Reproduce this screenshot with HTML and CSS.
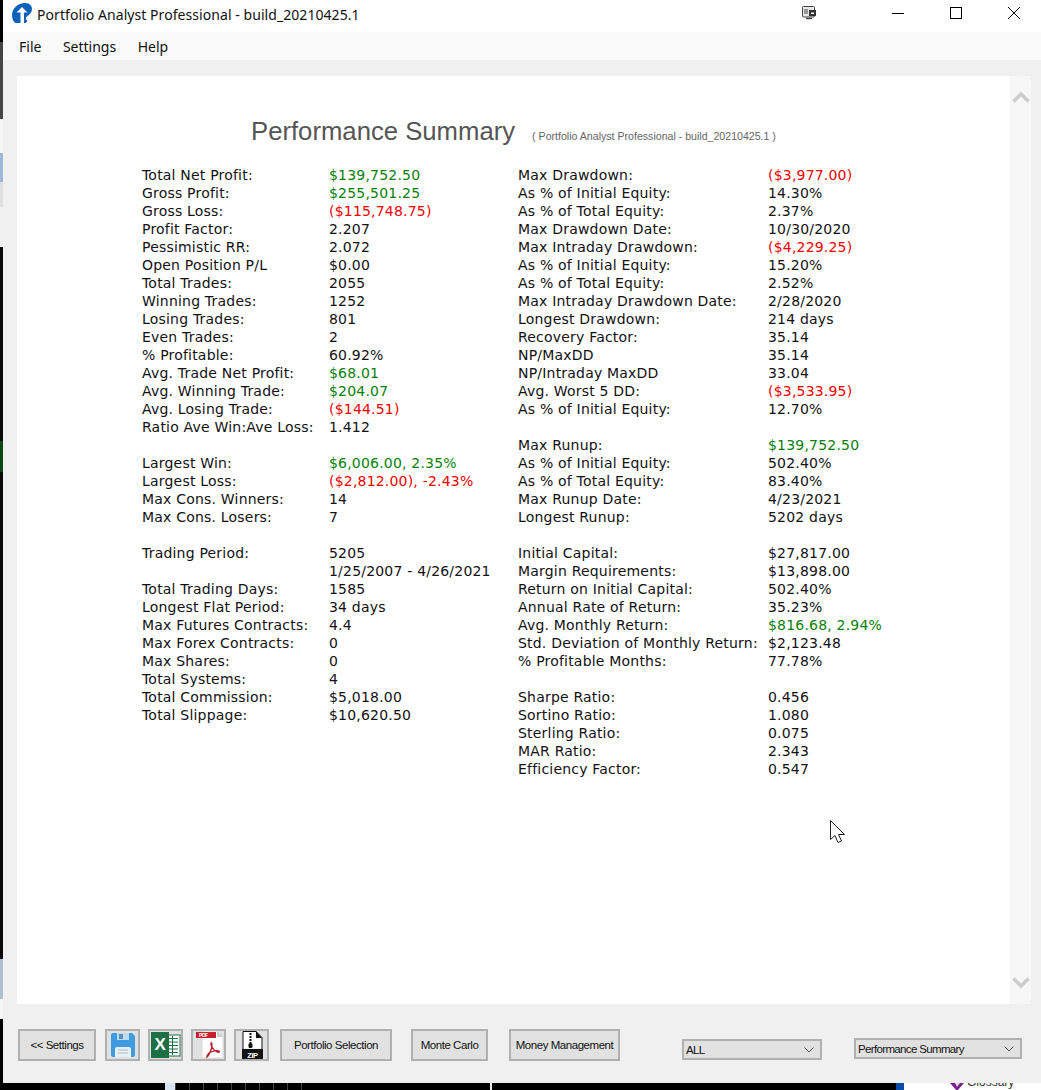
FILE: index.html
```html
<!DOCTYPE html>
<html lang="en">
<head>
<meta charset="utf-8">
<title>Portfolio Analyst Professional</title>
<link rel="stylesheet" href="styles.css">
</head>
<body>
<div class="screen">
  <div class="edge">
    <div class="e e-black1"></div><div class="e e-gray"></div><div class="e e-white"></div><div class="e e-blue"></div><div class="e e-lgray"></div><div class="e e-white2"></div><div class="e e-black2"></div><div class="e e-green"></div><div class="e e-black3"></div><div class="e e-steel"></div><div class="e e-white3"></div><div class="e e-black4"></div>
  </div>
  <div class="window">
    <header class="titlebar">
      <svg class="logo" viewBox="0 0 20 20" width="20" height="20"><path d="M0 12C0 6 5 .5 12 0c4-.3 8 1.500 8 6 0 3-2 5.500-4.500 7L14 14.500V20H4C1.500 19.500 0 15.500 0 12z" fill="#0a63b8"/><path d="M10 4l5.500 5.500H12V20H8.500V9.500H4.500z" fill="#fff"/><rect x="13" y="17" width="2" height="2" fill="#0a63b8"/></svg>
      <span class="app-title">Portfolio Analyst Professional - build_20210425.1</span>
      <svg class="snap" viewBox="0 0 14 14" width="14" height="14"><rect x=".5" y=".5" width="12" height="10.500" rx="1" fill="#e6e6e6" stroke="#444"/><path d="M3 3v5M5 3v5" stroke="#444"/><rect x="7" y="4" width="7" height="6" fill="#333"/><rect x="9" y="6.500" width="3" height="1.500" fill="#fff"/><path d="M4 12.500h6" stroke="#444" stroke-width="1.500"/></svg>
      <div class="winbtns">
        <svg viewBox="0 0 12 12" width="12" height="12"><path d="M0 6.500h12" stroke="#000"/></svg>
        <svg viewBox="0 0 12 12" width="12" height="12"><rect x=".5" y=".5" width="11" height="11" fill="none" stroke="#000"/></svg>
        <svg viewBox="0 0 12 12" width="12" height="12"><path d="M0 0l12 12M12 0L0 12" stroke="#000"/></svg>
      </div>
    </header>
    <nav class="menubar"><span>File</span><span>Settings</span><span>Help</span></nav>
    <main class="panel">
      <div class="report">
        <div class="heading"><h1>Performance Summary</h1><span class="sub">( Portfolio Analyst Professional - build_20210425.1 )</span></div>
        <div class="cols">
          <div class="col col-l">
            <div class="row"><span>Total Net Profit:</span><span class="g">$139,752.50</span></div>
            <div class="row"><span>Gross Profit:</span><span class="g">$255,501.25</span></div>
            <div class="row"><span>Gross Loss:</span><span class="r">($115,748.75)</span></div>
            <div class="row"><span>Profit Factor:</span><span>2.207</span></div>
            <div class="row"><span>Pessimistic RR:</span><span>2.072</span></div>
            <div class="row"><span>Open Position P/L</span><span>$0.00</span></div>
            <div class="row"><span>Total Trades:</span><span>2055</span></div>
            <div class="row"><span>Winning Trades:</span><span>1252</span></div>
            <div class="row"><span>Losing Trades:</span><span>801</span></div>
            <div class="row"><span>Even Trades:</span><span>2</span></div>
            <div class="row"><span>% Profitable:</span><span>60.92%</span></div>
            <div class="row"><span>Avg. Trade Net Profit:</span><span class="g">$68.01</span></div>
            <div class="row"><span>Avg. Winning Trade:</span><span class="g">$204.07</span></div>
            <div class="row"><span>Avg. Losing Trade:</span><span class="r">($144.51)</span></div>
            <div class="row"><span>Ratio Ave Win:Ave Loss:</span><span>1.412</span></div>
            <div class="row blank"></div>
            <div class="row"><span>Largest Win:</span><span class="g">$6,006.00, 2.35%</span></div>
            <div class="row"><span>Largest Loss:</span><span class="r">($2,812.00), -2.43%</span></div>
            <div class="row"><span>Max Cons. Winners:</span><span>14</span></div>
            <div class="row"><span>Max Cons. Losers:</span><span>7</span></div>
            <div class="row blank"></div>
            <div class="row"><span>Trading Period:</span><span>5205</span></div>
            <div class="row"><span></span><span>1/25/2007 - 4/26/2021</span></div>
            <div class="row"><span>Total Trading Days:</span><span>1585</span></div>
            <div class="row"><span>Longest Flat Period:</span><span>34 days</span></div>
            <div class="row"><span>Max Futures Contracts:</span><span>4.4</span></div>
            <div class="row"><span>Max Forex Contracts:</span><span>0</span></div>
            <div class="row"><span>Max Shares:</span><span>0</span></div>
            <div class="row"><span>Total Systems:</span><span>4</span></div>
            <div class="row"><span>Total Commission:</span><span>$5,018.00</span></div>
            <div class="row"><span>Total Slippage:</span><span>$10,620.50</span></div>
          </div>
          <div class="col col-r">
            <div class="row"><span>Max Drawdown:</span><span class="r">($3,977.00)</span></div>
            <div class="row"><span>As % of Initial Equity:</span><span>14.30%</span></div>
            <div class="row"><span>As % of Total Equity:</span><span>2.37%</span></div>
            <div class="row"><span>Max Drawdown Date:</span><span>10/30/2020</span></div>
            <div class="row"><span>Max Intraday Drawdown:</span><span class="r">($4,229.25)</span></div>
            <div class="row"><span>As % of Initial Equity:</span><span>15.20%</span></div>
            <div class="row"><span>As % of Total Equity:</span><span>2.52%</span></div>
            <div class="row"><span>Max Intraday Drawdown Date:</span><span>2/28/2020</span></div>
            <div class="row"><span>Longest Drawdown:</span><span>214 days</span></div>
            <div class="row"><span>Recovery Factor:</span><span>35.14</span></div>
            <div class="row"><span>NP/MaxDD</span><span>35.14</span></div>
            <div class="row"><span>NP/Intraday MaxDD</span><span>33.04</span></div>
            <div class="row"><span>Avg. Worst 5 DD:</span><span class="r">($3,533.95)</span></div>
            <div class="row"><span>As % of Initial Equity:</span><span>12.70%</span></div>
            <div class="row blank"></div>
            <div class="row"><span>Max Runup:</span><span class="g">$139,752.50</span></div>
            <div class="row"><span>As % of Initial Equity:</span><span>502.40%</span></div>
            <div class="row"><span>As % of Total Equity:</span><span>83.40%</span></div>
            <div class="row"><span>Max Runup Date:</span><span>4/23/2021</span></div>
            <div class="row"><span>Longest Runup:</span><span>5202 days</span></div>
            <div class="row blank"></div>
            <div class="row"><span>Initial Capital:</span><span>$27,817.00</span></div>
            <div class="row"><span>Margin Requirements:</span><span>$13,898.00</span></div>
            <div class="row"><span>Return on Initial Capital:</span><span>502.40%</span></div>
            <div class="row"><span>Annual Rate of Return:</span><span>35.23%</span></div>
            <div class="row"><span>Avg. Monthly Return:</span><span class="g">$816.68, 2.94%</span></div>
            <div class="row"><span>Std. Deviation of Monthly Return:</span><span>$2,123.48</span></div>
            <div class="row"><span>% Profitable Months:</span><span>77.78%</span></div>
            <div class="row blank"></div>
            <div class="row"><span>Sharpe Ratio:</span><span>0.456</span></div>
            <div class="row"><span>Sortino Ratio:</span><span>1.080</span></div>
            <div class="row"><span>Sterling Ratio:</span><span>0.075</span></div>
            <div class="row"><span>MAR Ratio:</span><span>2.343</span></div>
            <div class="row"><span>Efficiency Factor:</span><span>0.547</span></div>
          </div>
        </div>
        <svg class="cursor" viewBox="0 0 16 24" width="16" height="24"><path d="M.5.500v19l4.500-4 3 7 3.500-1.500-3-6.500h6z" fill="#fff" stroke="#222"/></svg>
      </div>
      <aside class="scrollbar">
        <svg viewBox="0 0 18 12" width="18" height="12"><path d="M1.500 10.500L9 3l7.500 7.500" fill="none" stroke="#cdcdcd" stroke-width="3.500"/></svg>
        <svg viewBox="0 0 18 12" width="18" height="12"><path d="M1.500 1.500L9 9l7.500-7.500" fill="none" stroke="#cdcdcd" stroke-width="3.500"/></svg>
      </aside>
    </main>
    <footer class="toolbar">
      <button class="btn b-settings">&lt;&lt; Settings</button>
      <button class="icon-btn ml9"><svg viewBox="0 0 26 26" width="26" height="26"><path d="M1 3q0-2 2-2h19l3 3v19q0 2-2 2H3q-2 0-2-2z" fill="#3f9be0"/><rect x="7" y="1" width="12" height="7" fill="#bcdcf3"/><rect x="9" y="2" width="4" height="5" fill="#5b8fb8"/><path d="M5 25v-8q0-2 2-2h12q2 0 2 2v8z" fill="#e8eef3"/><path d="M8 18h10M8 21h10" stroke="#a9b8c4"/></svg></button>
      <button class="icon-btn ml8"><svg viewBox="0 0 31 26" width="31" height="26"><rect x="17" y="3" width="13" height="21" fill="#fff" stroke="#1d7044"/><path d="M19 6.500h9M19 10h9M19 13.500h9M19 17h9M19 20.500h9M22.500 4v19" stroke="#1d7044"/><rect x="1" y="0" width="18" height="26" fill="#1d7044"/><text class="x-glyph" x="10" y="18" text-anchor="middle">X</text></svg></button>
      <button class="icon-btn ml8"><svg viewBox="0 0 32 28" width="32" height="28"><path d="M9 0h15l6 6v21H9z" fill="#fff" stroke="#d8d8d8"/><path d="M24 0v6h6z" fill="#cfcfcf"/><rect x="3" y="1" width="20" height="6" fill="#c8202f"/><text class="pdf-glyph" x="6" y="6">PDF</text><path d="M14 26c2-2 4-6 5-11 0-3-.5-4-1-3-.7 2 2 7 6 9 2 .6 3 0 2-1-2-1-7 0-10 2-1 1-2 3-2 4z" fill="none" stroke="#b3202c" stroke-width="1.300"/></svg></button>
      <button class="icon-btn ml8"><svg viewBox="0 0 24 28" width="24" height="28"><path d="M3 .5h13l6 6V27H3z" fill="#fff" stroke="#111"/><path d="M16 0v7h6z" fill="#111"/><path d="M10.500 2v10" stroke="#111" stroke-width="2" stroke-dasharray="2 1"/><rect x="8.500" y="12" width="4" height="5" rx="1.500" fill="#111"/><rect x="2" y="18" width="21" height="10" fill="#111"/><text class="zip-glyph" x="12.500" y="26.500" text-anchor="middle">ZIP</text></svg></button>
      <button class="btn b-portfolio">Portfolio Selection</button>
      <button class="btn b-monte">Monte Carlo</button>
      <button class="btn b-money">Money Management</button>
      <div class="combo c-all"><span>ALL</span><svg viewBox="0 0 10 6" width="10" height="6"><path d="M.5.500L5 5l4.500-4.500" fill="none" stroke="#555"/></svg></div>
      <div class="combo c-report"><span>Performance Summary</span><svg viewBox="0 0 10 6" width="10" height="6"><path d="M.5.500L5 5l4.500-4.500" fill="none" stroke="#555"/></svg></div>
    </footer>
  </div>
  <div class="taskstrip">
    <div class="t-black t-a"></div><div class="t-light"></div><div class="t-ticks"></div><div class="t-black t-b"></div><div class="t-line"></div><div class="t-black t-c"></div><div class="t-blue"></div>
    <div class="t-white"><svg viewBox="0 0 16 8" width="16" height="8"><path d="M1 0h14L8 8z" fill="#7a1d8f"/><path d="M6 0l5 0-3 4z" fill="#ddd"/></svg><span>Glossary</span></div>
  </div>
</div>
</body>
</html>
```
FILE: styles.css
```css
* { box-sizing: border-box; }
html, body { margin: 0; padding: 0; background: #000; }
body { width: 1041px; height: 1090px; overflow: hidden; }
.screen { display: grid; grid-template-columns: 3px 1038px; grid-template-rows: 1083px 7px; width: 1041px; height: 1090px; }

.edge { display: flex; flex-direction: column; }
.e-black1 { height: 42px; background: #000; }
.e-gray { height: 77px; background: #454545; }
.e-white { height: 34px; background: #f5f5f5; }
.e-blue { height: 29px; background: #9db8d8; }
.e-lgray { height: 25px; background: #e0e0e0; }
.e-white2 { height: 40px; background: #f0f0f0; }
.e-black2 { height: 194px; background: #0a0a0a; }
.e-green { height: 31px; background: #0a4a12; }
.e-black3 { height: 487px; background: #0a0a0a; }
.e-steel { height: 40px; background: #aebfd0; }
.e-white3 { height: 20px; background: #f5f5f5; }
.e-black4 { flex: 1; background: #000; }

.window { display: flex; flex-direction: column; background: #f0f0f0; }

.titlebar { height: 32px; background: #fff; display: flex; align-items: center; padding-left: 9px; font-family: "Noto Sans", sans-serif; }
.logo { margin-top: -6px; flex: none; }
.app-title { margin-left: 5px; font-size: 14px; letter-spacing: .06px; color: #111; margin-top: -3px; white-space: nowrap; width: 765px; }
.snap { margin-top: -6px; flex: none; }
.winbtns { display: flex; gap: 46px; margin-left: 76px; margin-top: -6px; }

.menubar { height: 28px; background: #f9f9f9; display: flex; align-items: center; padding-left: 16px; gap: 21.500px; font-family: "Noto Sans", sans-serif; font-size: 14px; color: #111; }

.panel { margin: 16px 10px 0 14px; height: 928px; background: #fff; display: flex; }
.report { flex: 1; position: relative; padding: 41px 0 0 125px; }
.scrollbar { width: 21px; background: #f7f7f7; display: flex; flex-direction: column; justify-content: space-between; align-items: center; padding: 15px 0 15px; }

.heading { display: flex; align-items: baseline; padding-left: 109px; height: 32px; margin-bottom: 17px; }
h1 { margin: 0; font: 400 25.700px "Liberation Sans", Arial, sans-serif; color: #555; white-space: nowrap; }
.sub { margin-left: 17px; font: 10.600px "Liberation Sans", Arial, sans-serif; color: #666; white-space: nowrap; }

.cols { display: flex; font: 14px/18px "DejaVu Sans", Verdana, sans-serif; letter-spacing: .2px; color: #111; }
.col-l { width: 376px; }
.col-l .row { grid-template-columns: 187px 1fr; }
.col-r .row { grid-template-columns: 250px 1fr; }
.row { display: grid; height: 18px; white-space: nowrap; }
.g { color: #088008; }
.r { color: #f00000; }
.cursor { position: absolute; left: 813px; top: 744px; }

.toolbar { flex: 1; display: flex; align-items: flex-start; padding: 25px 0 0 15px; }
.btn, .icon-btn { height: 32px; background: #e1e1e1; border: 2px solid #b0b0b0; padding: 0; display: flex; align-items: center; justify-content: center; font: 11.500px "Liberation Sans", Arial, sans-serif; color: #111; letter-spacing: -.45px; }
.icon-btn { width: 35px; }
.icon-btn svg { display: block; flex: none; }
.ml9 { margin-left: 9px; }
.ml8 { margin-left: 8px; }
.b-settings { width: 78px; }
.b-portfolio { width: 112px; margin-left: 11px; }
.b-monte { width: 77px; margin-left: 19px; }
.b-money { width: 111px; margin-left: 21px; }
.x-glyph { font: 700 17px "Liberation Sans", sans-serif; fill: #fff; }
.pdf-glyph { font: 700 5px "Liberation Sans", sans-serif; fill: #fff; }
.zip-glyph { font: 700 7.500px "Liberation Sans", sans-serif; fill: #fff; }

.combo { height: 21px; background: #e1e1e1; border: 2px solid #b0b0b0; display: flex; align-items: center; justify-content: space-between; font: 11.500px "Liberation Sans", Arial, sans-serif; color: #111; letter-spacing: -.65px; }
.c-all { width: 140px; margin: 10px 0 0 62px; padding: 0 6px 0 2px; }
.c-report { width: 168px; margin: 9px 0 0 32px; padding: 0 6px 0 2px; }

.taskstrip { grid-column: 1 / 3; display: flex; height: 7px; overflow: hidden; background: #000; }
.t-a { width: 165px; }
.t-light { width: 10px; background: #d6e4f3; }
.t-ticks { width: 130px; background: repeating-linear-gradient(90deg, #444 0 1px, #000 1px 14px); }
.t-b { width: 185px; }
.t-line { width: 2px; background: #eee; }
.t-c { width: 404px; }
.t-blue { width: 8px; background: #0a4da8; }
.t-white { flex: 1; background: #fff; display: flex; align-items: flex-start; padding-left: 45px; gap: 2px; font: 12px "Liberation Sans", Arial, sans-serif; color: #333; }
.t-white span { margin-top: -8px; }
```
